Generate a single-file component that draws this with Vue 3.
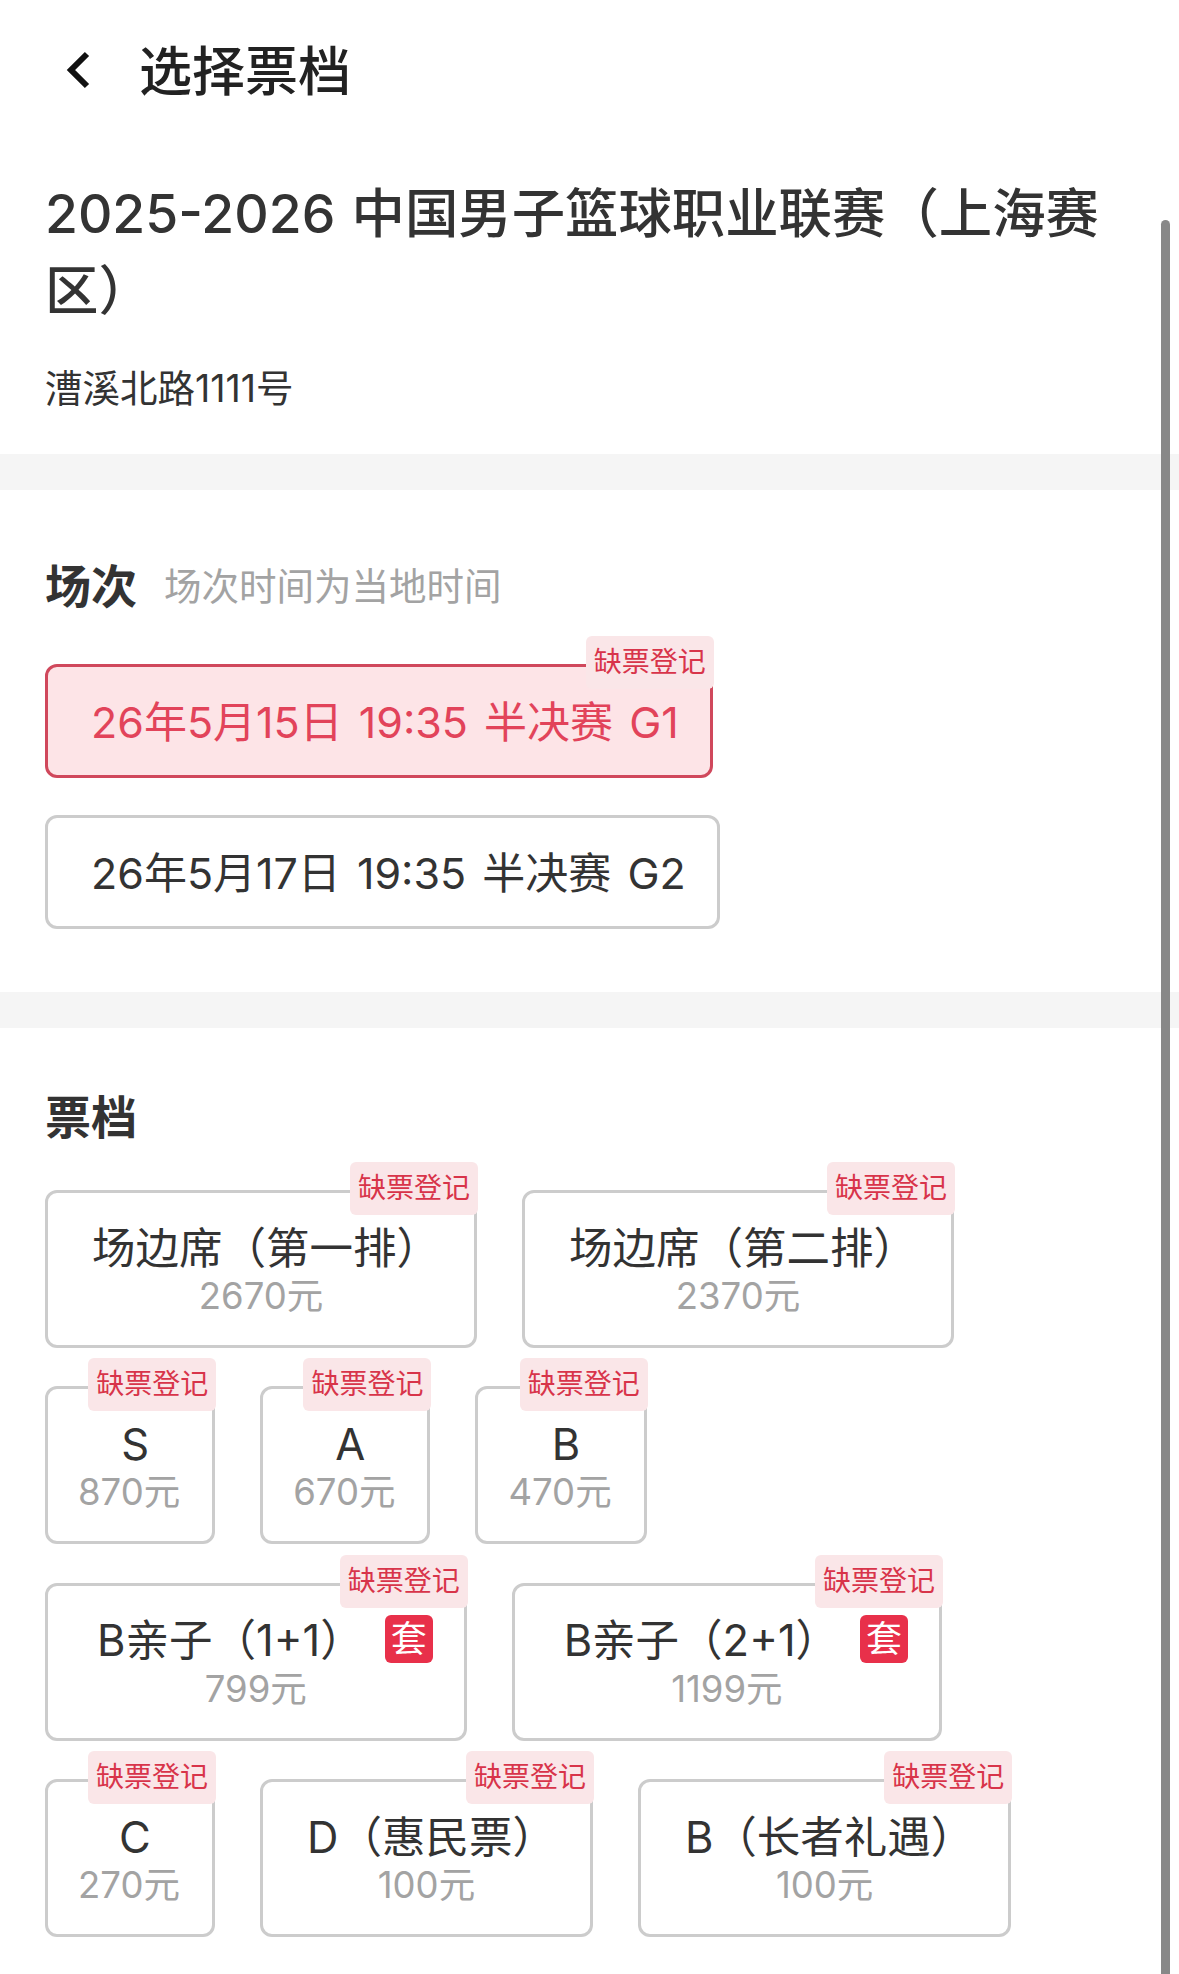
<template>
  <div class="page">
    <header class="topbar">
      <svg class="back" width="26" height="38" viewBox="0 0 26 38">
        <path d="M22 3 L6 19 L22 35" fill="none" stroke="#111" stroke-width="6" />
      </svg>
      <h1>选择票档</h1>
    </header>

    <section class="info">
      <h2>2025-2026 中国男子篮球职业联赛（上海赛区）</h2>
      <p>漕溪北路1111号</p>
    </section>

    <section class="block sessions">
      <div class="heading">
        <h3>场次</h3>
        <span>场次时间为当地时间</span>
      </div>
      <div class="session-list">
        <div v-for="s in sessions" :key="s.text" class="session" :class="{ active: s.active }">
          {{ s.text }}
          <span v-if="s.active" class="tag">缺票登记</span>
        </div>
      </div>
    </section>

    <section class="block tickets">
      <div class="heading">
        <h3>票档</h3>
      </div>
      <div class="ticket-list">
        <div v-for="t in tickets" :key="t.name" class="ticket" :class="{ narrow: t.name.length === 1, bundled: t.bundle }">
          <span class="tag">缺票登记</span>
          <div class="name">
            <span>{{ t.name }}</span>
            <span v-if="t.bundle" class="bundle">套</span>
          </div>
          <div class="price">{{ t.price }}元</div>
        </div>
      </div>
    </section>

    <div class="scrollbar"></div>
  </div>
</template>

<script setup>
const sessions = [
  { text: "26年5月15日 19:35 半决赛 G1", active: true },
  { text: "26年5月17日 19:35 半决赛 G2", active: false },
];

const tickets = [
  { name: "场边席（第一排）", price: 2670 },
  { name: "场边席（第二排）", price: 2370 },
  { name: "S", price: 870 },
  { name: "A", price: 670 },
  { name: "B", price: 470 },
  { name: "B亲子（1+1）", price: 799, bundle: true },
  { name: "B亲子（2+1）", price: 1199, bundle: true },
  { name: "C", price: 270 },
  { name: "D（惠民票）", price: 100 },
  { name: "B（长者礼遇）", price: 100 },
];
</script>

<style>
html,
body {
  margin: 0;
  background: #fff;
}
</style>

<style scoped>
.page {
  position: relative;
  height: 1974px;
  overflow: hidden;
  background: #fff;
  color: #333;
  font-family: "Inter", "Noto Sans CJK SC", sans-serif;
}
.topbar {
  display: flex;
  align-items: center;
  height: 140px;
  padding-left: 65px;
  box-sizing: border-box;
}
.back {
  margin-right: 48px;
}
.topbar h1 {
  margin: 0 0 5px;
  font-size: 53px;
  font-weight: 500;
  color: #222;
}
.info {
  padding: 35px 45px 40px;
}
.info h2 {
  margin: 0 -8px 0 0;
  font-size: 53.4px;
  line-height: 77px;
  font-weight: 500;
  word-spacing: 2px;
}
.info p {
  margin: 35px 0 0;
  font-size: 37.5px;
  line-height: 50px;
}
.block {
  border-top: 36px solid #f5f5f5;
  padding-left: 45px;
}
.sessions {
  padding-top: 62px;
  padding-bottom: 63px;
}
.tickets {
  padding-top: 55px;
}
.heading {
  display: flex;
  align-items: center;
  height: 62px;
}
.heading h3 {
  margin: 0 27px 0 0;
  font-size: 46px;
  font-weight: 700;
}
.heading span {
  font-size: 37.5px;
  color: #a3a3a3;
}
.session-list {
  display: flex;
  flex-direction: column;
  align-items: flex-start;
  gap: 37px;
  margin-top: 50px;
}
.session {
  position: relative;
  height: 114px;
  box-sizing: border-box;
  padding: 0 15px 4px 43px;
  display: flex;
  align-items: center;
  white-space: pre;
  font-size: 43px;
  word-spacing: 4px;
  border: 3px solid #ccc;
  border-radius: 12px;
}
.session.active {
  background: #fde4e7;
  border-color: #d0485c;
  color: #e2435a;
}
.ticket-list {
  display: flex;
  flex-wrap: wrap;
  gap: 38.4px 45px;
  width: 1030px;
  margin-top: 45px;
}
.ticket {
  position: relative;
  min-width: 170px;
  height: 158px;
  box-sizing: border-box;
  padding: 23px 39px 0;
  border: 3px solid #ccc;
  border-radius: 12px;
  text-align: center;
}
.name {
  display: flex;
  align-items: center;
  justify-content: center;
  height: 58px;
  margin: 0 -5px 0 5px;
  font-size: 43.5px;
}
.price {
  font-size: 36.5px;
  line-height: 44px;
  color: #a3a3a3;
}
.ticket.narrow {
  padding-left: 31px;
  padding-right: 31px;
}
.ticket.narrow .name {
  box-sizing: border-box;
  margin: 0;
  padding: 5px 0 0 10px;
}
.ticket.narrow .price {
  margin: 0 1px 0 -1px;
}
.ticket.bundled {
  padding-left: 49px;
  padding-right: 31px;
}
.ticket.bundled .name {
  margin: 0;
}
.ticket.bundled .price {
  margin-left: -18px;
}
.bundle {
  width: 48px;
  height: 48px;
  margin: 2px 0 0 21px;
  border-radius: 6px;
  background: #e8304a;
  color: #fff;
  font-size: 36px;
  line-height: 48px;
}
.tag {
  position: absolute;
  top: -31px;
  right: -4px;
  width: 128px;
  height: 53px;
  border-radius: 6px;
  background: #fae6e8;
  color: #d8344a;
  font-size: 28px;
  line-height: 53px;
  text-align: center;
  word-spacing: 0;
}
.scrollbar {
  position: absolute;
  top: 220px;
  right: 9px;
  bottom: 0;
  width: 9px;
  border-radius: 5px 5px 0 0;
  background: #888;
}
</style>
